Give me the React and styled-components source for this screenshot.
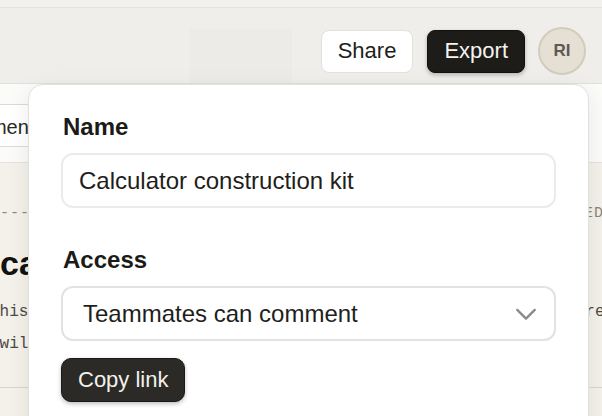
import React from "react";
import styled, { createGlobalStyle } from "styled-components";

const GlobalStyle = createGlobalStyle`
  html, body {
    margin: 0;
    padding: 0;
    width: 602px;
    height: 416px;
    overflow: hidden;
    background: #f4f1ea;
    font-family: "Liberation Sans", Arial, sans-serif;
  }
  * { box-sizing: border-box; }
`;

const App = () => {
  return (
    <Page>
      <GlobalStyle />
      <TopStrip />
      <Toolbar>
        <Ghost />
        <Actions>
          <Button>Share</Button>
          <Button dark>Export</Button>
          <Avatar>RI</Avatar>
        </Actions>
      </Toolbar>
      <SubBar>
        <SubButton>Add comment</SubButton>
      </SubBar>
      <Doc>
        <MetaRow>
          <span>---- Draft</span>
          <span>TO EDIT</span>
        </MetaRow>
        <Heading>calculator construction kit</Heading>
        <Paragraph>
          <div>This document describes the pieces of the kit, and how these are put together.</div>
          <div> will be updated as the kit evolves.</div>
        </Paragraph>
        <Rule />
      </Doc>

      <Popover>
        <Label>Name</Label>
        <Field defaultValue="Calculator construction kit" />
        <Label top={37}>Access</Label>
        <SelectBox>
          <span>Teammates can comment</span>
          <svg width="28" height="28" viewBox="0 0 24 24" fill="none" stroke="#8a8a86" strokeWidth="2" strokeLinecap="round" strokeLinejoin="round">
            <path d="M4.5 8.5l7.5 7.5 7.5-7.5" />
          </svg>
        </SelectBox>
        <CopyButton>Copy link</CopyButton>
      </Popover>
    </Page>
  );
};

const Page = styled.div`
  position: relative;
  width: 602px;
  height: 416px;
  overflow: hidden;
  background: #f4f1ea;
`;

const TopStrip = styled.div`
  height: 8px;
  background: #f2f1ed;
  border-bottom: 1px solid #e4e2dd;
`;

const Toolbar = styled.div`
  height: 76px;
  display: flex;
  align-items: flex-end;
  padding: 0 16px 0 190px;
  background: #efeeea;
  border-bottom: 1px solid #e2e0da;
`;

const Ghost = styled.div`
  width: 102px;
  height: 54px;
  background: #ecebe7;
`;

const Actions = styled.div`
  margin-left: auto;
  margin-bottom: 8px;
  display: flex;
  align-items: center;
  gap: 14px;
`;

const Button = styled.button`
  height: 43px;
  padding: 0 16px;
  border-radius: 8px;
  font-family: inherit;
  font-size: 22px;
  border: 1px solid ${p => (p.dark ? "#111" : "#e3e1dc")};
  background: ${p => (p.dark ? "#1d1c19" : "#ffffff")};
  color: ${p => (p.dark ? "#f4f3ef" : "#1f1e1b")};
  box-shadow: ${p => (p.dark ? "0 2px 4px rgba(0,0,0,0.25)" : "none")};
`;

const Avatar = styled.div`
  width: 48px;
  height: 48px;
  border-radius: 50%;
  margin-left: -1px;
  background: #e6dfd3;
  border: 2px solid #d3cbbd;
  color: #5e5a53;
  font-weight: 700;
  font-size: 17px;
  display: flex;
  align-items: center;
  justify-content: center;
`;

const SubBar = styled.div`
  height: 79px;
  background: #fbfbfa;
  border-bottom: 1px solid #e4e2dc;
  display: flex;
  align-items: flex-start;
  padding-top: 20px;
`;

const SubButton = styled.div`
  margin-left: -104px;
  height: 43px;
  padding: 3px 14px 0;
  display: flex;
  align-items: center;
  font-size: 20px;
  color: #2a2925;
  background: #ffffff;
  border: 1px solid #dddbd5;
  border-radius: 6px;
`;

const Doc = styled.div`
  margin-left: -10px;
  padding-top: 42px;
  font-family: "Liberation Mono", "Courier New", monospace;
  color: #55534e;
  white-space: pre;
`;

const MetaRow = styled.div`
  display: flex;
  justify-content: space-between;
  width: 634px;
  font-size: 15px;
  line-height: 17px;
  color: #8a8780;
  letter-spacing: 1px;
`;

const Heading = styled.h1`
  margin: 21px 0 0 10px;
  font-family: "Liberation Sans", Arial, sans-serif;
  font-size: 34px;
  font-weight: 800;
  color: #121210;
  line-height: 40px;
`;

const Paragraph = styled.div`
  margin-top: 13px;
  font-size: 16px;
  line-height: 32px;
  color: #4c4a45;
`;

const Rule = styled.div`
  margin-top: 27px;
  width: 720px;
  border-top: 1px solid #d9d5cc;
`;

const Popover = styled.div`
  position: absolute;
  left: 28px;
  top: 84px;
  width: 561px;
  height: 360px;
  background: #ffffff;
  border: 1px solid #e2e0db;
  border-radius: 15px;
  box-shadow: 0 6px 24px rgba(0, 0, 0, 0.08);
  padding: 27px 32px 0;
  display: flex;
  flex-direction: column;
  white-space: normal;
`;

const Label = styled.div`
  margin-top: ${p => p.top || 0}px;
  padding-left: 2px;
  font-size: 24px;
  font-weight: 700;
  line-height: 29px;
  color: #1b1a17;
`;

const Field = styled.input`
  margin-top: 12px;
  height: 55px;
  width: 100%;
  padding: 0 16px;
  border: 2px solid #ecebe8;
  border-radius: 12px;
  font-family: inherit;
  font-size: 24px;
  color: #1f1e1b;
  outline: none;
`;

const SelectBox = styled.div`
  margin-top: 12px;
  height: 55px;
  padding: 0 14px 0 20px;
  border: 2px solid #e3e2df;
  border-radius: 12px;
  display: flex;
  align-items: center;
  justify-content: space-between;
  font-size: 24px;
  color: #1f1e1b;
`;

const CopyButton = styled.button`
  align-self: flex-start;
  margin-top: 17px;
  height: 44px;
  padding: 0 16px;
  border-radius: 10px;
  border: 1px solid #1a1a17;
  background: #2b2a26;
  color: #f2f1ec;
  font-family: inherit;
  font-size: 22px;
  box-shadow: 0 2px 4px rgba(0, 0, 0, 0.25);
`;

export default App;
